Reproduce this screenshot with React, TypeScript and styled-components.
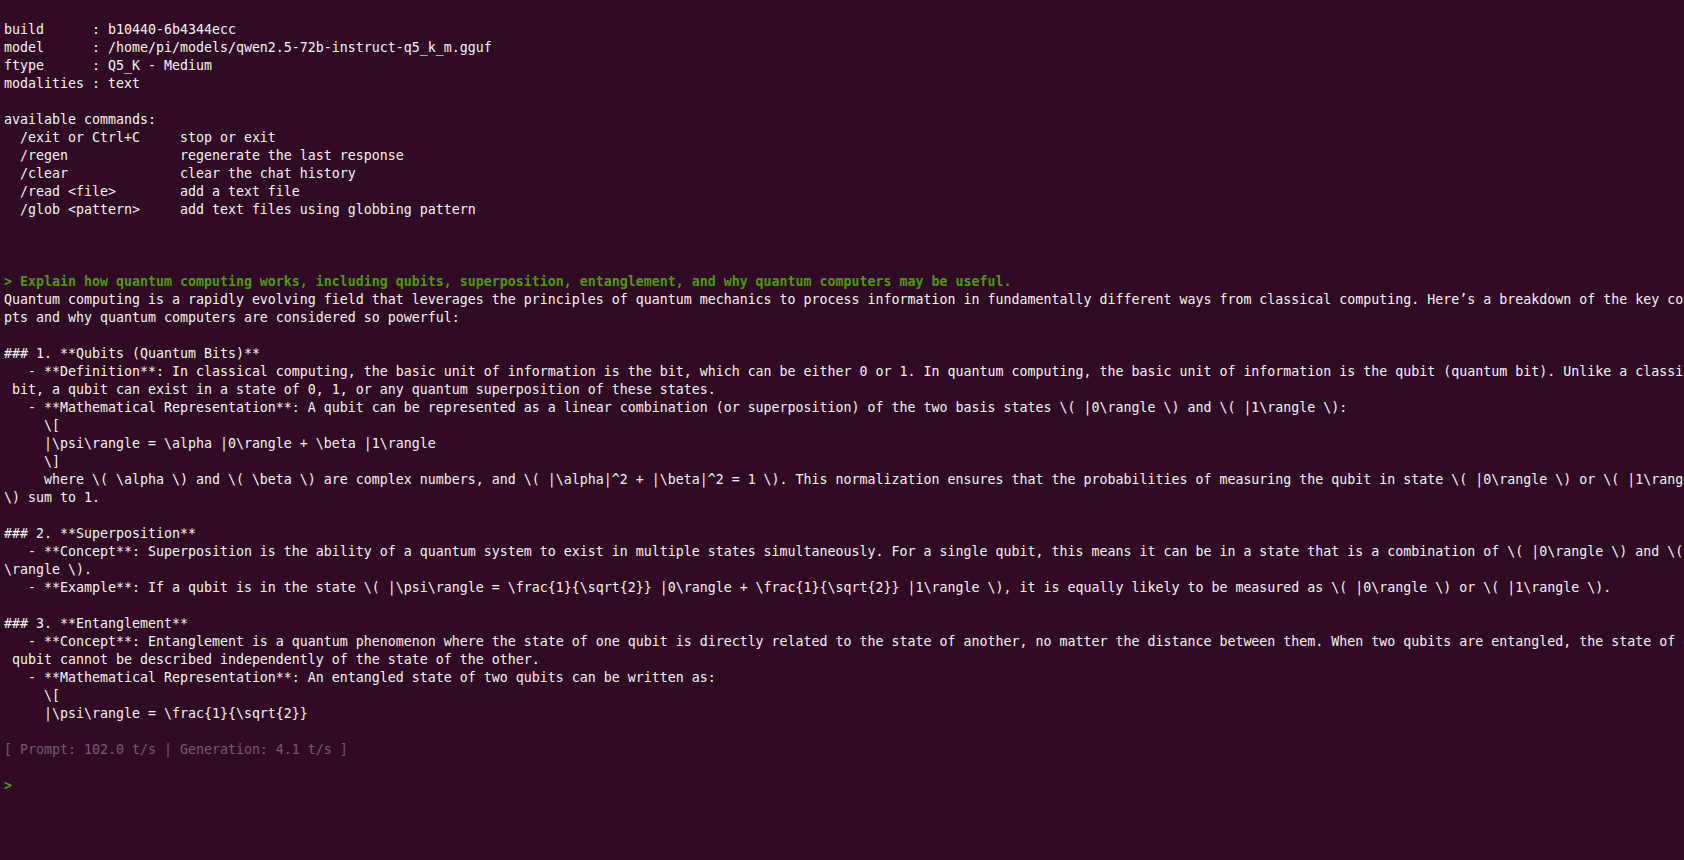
import React from "react";
import styled, { createGlobalStyle } from "styled-components";

const GlobalStyle = createGlobalStyle`
  html, body {
    margin: 0;
    padding: 0;
    height: 100%;
    background: #300a24;
    overflow: hidden;
  }
  #root {
    height: 100%;
  }
`;

const Terminal = styled.main`
  box-sizing: border-box;
  width: 100%;
  height: 100vh;
  background: #300a24;
  padding: 21px 0 0 4px;
  overflow: hidden;
  font-family: "DejaVu Sans Mono", "Liberation Mono", monospace;
  font-size: 13.29px;
  line-height: 18px;
  color: #f4f4f4;
  display: flex;
  flex-direction: column;
`;

type Tone = "normal" | "prompt" | "dim";

const Line = styled.div<{ $tone: Tone }>`
  height: 18px;
  flex: none;
  white-space: pre;
  overflow: hidden;
  color: ${({ $tone }) =>
    $tone === "prompt" ? "#4e9a06" : $tone === "dim" ? "#775a71" : "#f4f4f4"};
  font-weight: ${({ $tone }) => ($tone === "prompt" ? 700 : 400)};
`;

type Row = { text: string; tone?: Tone };

const rows: Row[] = [
  { text: "build      : b10440-6b4344ecc" },
  { text: "model      : /home/pi/models/qwen2.5-72b-instruct-q5_k_m.gguf" },
  { text: "ftype      : Q5_K - Medium" },
  { text: "modalities : text" },
  { text: "" },
  { text: "available commands:" },
  { text: "  /exit or Ctrl+C     stop or exit" },
  { text: "  /regen              regenerate the last response" },
  { text: "  /clear              clear the chat history" },
  { text: "  /read <file>        add a text file" },
  { text: "  /glob <pattern>     add text files using globbing pattern" },
  { text: "" },
  { text: "" },
  { text: "" },
  {
    text: "> Explain how quantum computing works, including qubits, superposition, entanglement, and why quantum computers may be useful.",
    tone: "prompt",
  },
  {
    text: "Quantum computing is a rapidly evolving field that leverages the principles of quantum mechanics to process information in fundamentally different ways from classical computing. Here\u2019s a breakdown of the key conce",
  },
  { text: "pts and why quantum computers are considered so powerful:" },
  { text: "" },
  { text: "### 1. **Qubits (Quantum Bits)**" },
  {
    text: "   - **Definition**: In classical computing, the basic unit of information is the bit, which can be either 0 or 1. In quantum computing, the basic unit of information is the qubit (quantum bit). Unlike a classical",
  },
  { text: " bit, a qubit can exist in a state of 0, 1, or any quantum superposition of these states." },
  {
    text: "   - **Mathematical Representation**: A qubit can be represented as a linear combination (or superposition) of the two basis states \\( |0\\rangle \\) and \\( |1\\rangle \\):",
  },
  { text: "     \\[" },
  { text: "     |\\psi\\rangle = \\alpha |0\\rangle + \\beta |1\\rangle" },
  { text: "     \\]" },
  {
    text: "     where \\( \\alpha \\) and \\( \\beta \\) are complex numbers, and \\( |\\alpha|^2 + |\\beta|^2 = 1 \\). This normalization ensures that the probabilities of measuring the qubit in state \\( |0\\rangle \\) or \\( |1\\rangle ",
  },
  { text: "\\) sum to 1." },
  { text: "" },
  { text: "### 2. **Superposition**" },
  {
    text: "   - **Concept**: Superposition is the ability of a quantum system to exist in multiple states simultaneously. For a single qubit, this means it can be in a state that is a combination of \\( |0\\rangle \\) and \\( |1",
  },
  { text: "\\rangle \\)." },
  {
    text: "   - **Example**: If a qubit is in the state \\( |\\psi\\rangle = \\frac{1}{\\sqrt{2}} |0\\rangle + \\frac{1}{\\sqrt{2}} |1\\rangle \\), it is equally likely to be measured as \\( |0\\rangle \\) or \\( |1\\rangle \\).",
  },
  { text: "" },
  { text: "### 3. **Entanglement**" },
  {
    text: "   - **Concept**: Entanglement is a quantum phenomenon where the state of one qubit is directly related to the state of another, no matter the distance between them. When two qubits are entangled, the state of one",
  },
  { text: " qubit cannot be described independently of the state of the other." },
  { text: "   - **Mathematical Representation**: An entangled state of two qubits can be written as:" },
  { text: "     \\[" },
  { text: "     |\\psi\\rangle = \\frac{1}{\\sqrt{2}}" },
  { text: "" },
  { text: "[ Prompt: 102.0 t/s | Generation: 4.1 t/s ]", tone: "dim" },
  { text: "" },
  { text: ">", tone: "prompt" },
];

export default function App() {
  return (
    <>
      <GlobalStyle />
      <Terminal>
        {rows.map((r, i) => (
          <Line key={i} $tone={r.tone ?? "normal"}>
            {r.text}
          </Line>
        ))}
      </Terminal>
    </>
  );
}
